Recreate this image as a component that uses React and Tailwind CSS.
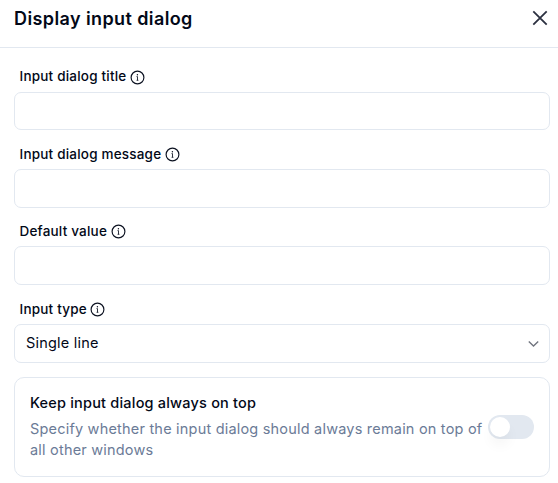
import React from "react";

function InfoIcon({ className }) {
  return (
    <svg className={`size-[15px] shrink-0 ${className}`} viewBox="0 0 15 15" fill="none" stroke="#0b1120">
      <circle cx="7.5" cy="7.5" r="6.4" strokeWidth="1.15" />
      <path d="M6.5 6.6h1v3.6M6.6 10.3h1.8" strokeWidth="0.85" />
      <circle cx="7.4" cy="4.7" r="0.7" fill="#0b1120" stroke="none" />
    </svg>
  );
}

function Label({ children, className, iconClass = "mt-px" }) {
  return (
    <div className={`flex h-5 items-center gap-[3.5px] pl-[5.5px] text-[13.5px] font-medium tracking-[0.2px] ${className}`}>
      <span className="whitespace-nowrap">{children}</span>
      <InfoIcon className={iconClass} />
    </div>
  );
}

export default function App() {
  return (
    <div className="h-[483px] w-[558px] overflow-hidden bg-white font-['Inter',sans-serif] text-[#020817]">
      <header className="flex h-12 items-start justify-between border-b border-[#e2e8f0] pl-[14px] pr-[10px]">
        <h1 className="mt-[5px] whitespace-nowrap text-[18px] leading-7 font-semibold tracking-[0.4px]">Display input dialog</h1>
        <button aria-label="Close" className="mt-[10px]">
          <svg className="size-4" viewBox="0 0 16 16" fill="none" stroke="#2b3040" strokeWidth="1.8">
            <path d="M1.3 1.3l13.4 13.4M14.7 1.3l-13.4 13.4" />
          </svg>
        </button>
      </header>
      <main className="pl-[14px] pr-2">
        <Label className="mt-[18px]" iconClass="mt-[3px]">Input dialog title</Label>
        <input aria-label="Input dialog title" className="mt-[6px] block h-[38px] w-full rounded-[7px] border border-[#e2e8f0] px-3 text-sm" />
        <Label className="mt-[14px]">Input dialog message</Label>
        <input aria-label="Input dialog message" className="mt-[5px] block h-[39px] w-full rounded-[7px] border border-[#e2e8f0] px-3 text-sm" />
        <Label className="mt-[13px]">Default value</Label>
        <input aria-label="Default value" className="mt-[5px] block h-[39px] w-full rounded-[7px] border border-[#e2e8f0] px-3 text-sm" />
        <Label className="mt-[14px]">Input type</Label>
        <button className="mt-[5px] flex h-[39px] w-full items-center justify-between rounded-[7px] border border-[#e2e8f0] pr-[10px] pl-[11px] text-[14.5px] tracking-[0.2px]">
          <span className="pb-[2px]">Single line</span>
          <svg className="h-[6px] w-[11px]" viewBox="0 0 11 6" fill="none" stroke="#71757f" strokeWidth="1.4">
            <path d="M0.8 0.6L5.5 5l4.7-4.4" />
          </svg>
        </button>
        <section className="mt-[14px] flex h-[100px] items-center justify-between rounded-[10px] border border-[#e2e8f0] px-[15px]">
          <div className="pb-[2px] whitespace-nowrap text-[14.5px] leading-[21px] tracking-[0.2px]">
            <h2 className="mb-[5px] font-medium">Keep input dialog always on top</h2>
            <p className="text-[#6b7b97]">
              Specify whether the input dialog should always remain on top of
              <br />
              all other windows
            </p>
          </div>
          <button role="switch" aria-checked="false" aria-label="Keep input dialog always on top" className="flex h-6 w-[46px] shrink-0 items-center rounded-full bg-[#e2e8f0] pl-[2px]">
            <span className="size-5 rounded-full bg-white shadow-[0_9px_14px_-2px_rgba(0,0,0,0.06)]" />
          </button>
        </section>
      </main>
    </div>
  );
}
